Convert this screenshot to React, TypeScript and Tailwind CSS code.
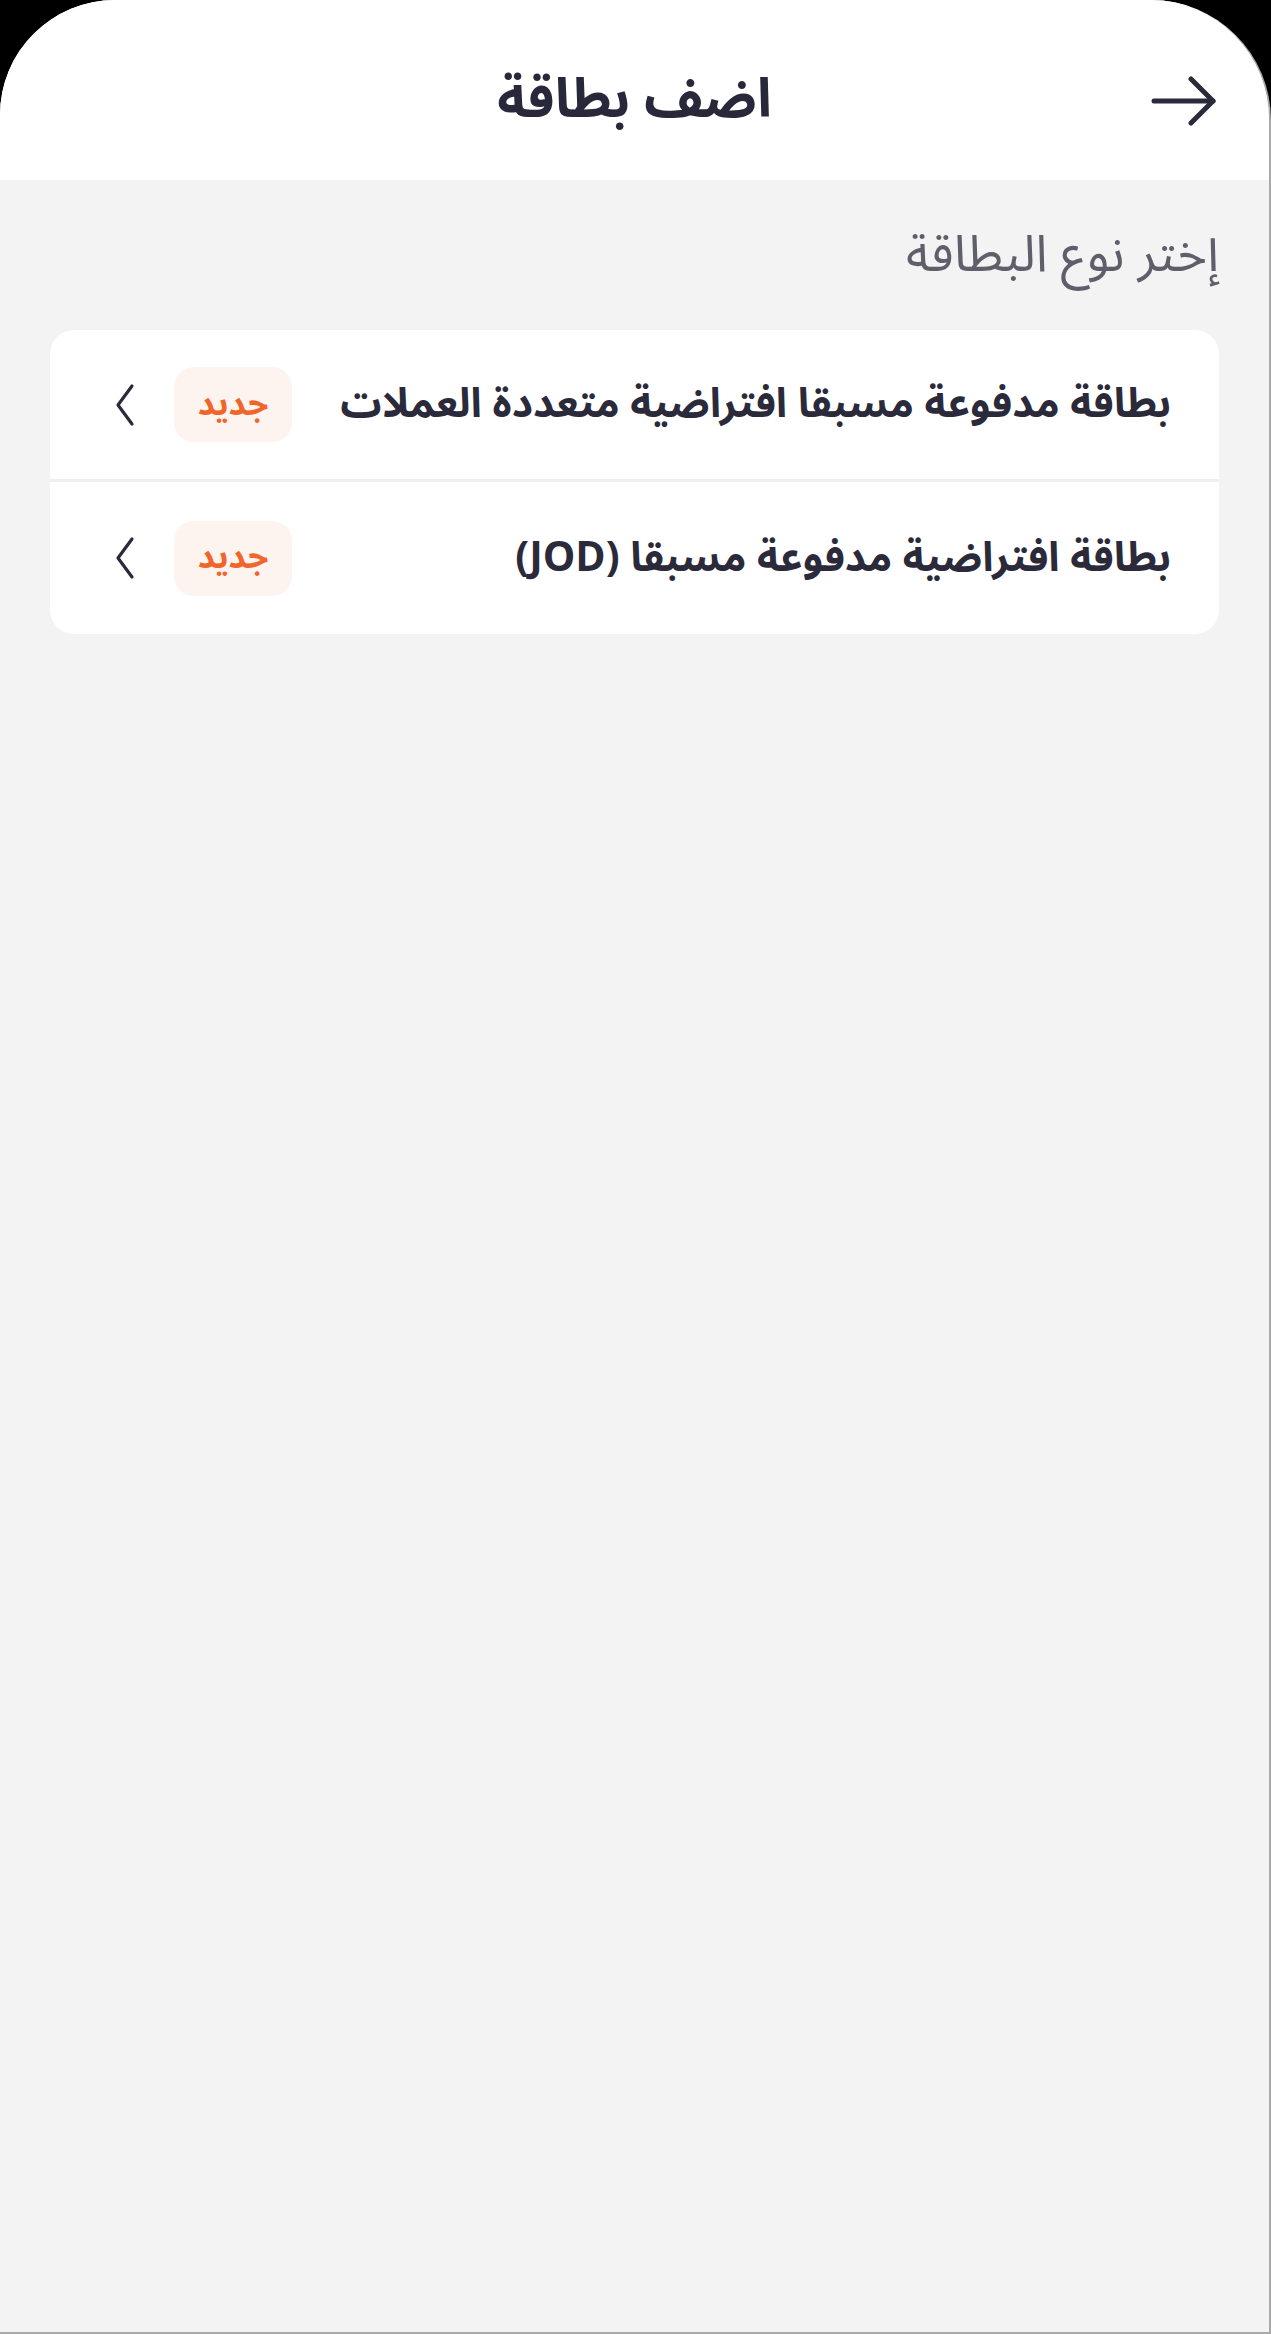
const font = { fontFamily: '"Noto Sans Arabic", "Noto Sans", "DejaVu Sans", sans-serif' };

const cards = [
  { title: "بطاقة مدفوعة مسبقا افتراضية متعددة العملات" },
  { title: "بطاقة افتراضية مدفوعة مسبقا (JOD)" },
];

function BackArrow() {
  return (
    <svg viewBox="0 0 66 50" className="h-[50px] w-[66px]" fill="none" stroke="#2b2a3a" strokeWidth={5} strokeLinecap="round" strokeLinejoin="round">
      <path d="M3 25 H62" />
      <path d="M40 3 L62 25 L40 47" />
    </svg>
  );
}

function Chevron() {
  return (
    <svg viewBox="0 0 22 44" className="h-[44px] w-[22px]" fill="none" stroke="#2b2a3a" strokeWidth={3.2} strokeLinecap="round" strokeLinejoin="round">
      <path d="M18 3 L4 22 L18 41" />
    </svg>
  );
}

function CardRow({ title, last }: { title: string; last?: boolean }) {
  return (
    <div
      className={
        "flex h-[152px] items-center pr-[48px] pl-[64px] " +
        (last ? "" : "border-b-[3px] border-[#efeff3]")
      }
    >
      <div className="flex-1 text-[41px] leading-none font-bold text-[#2b2a3a]">{title}</div>
      <div className="flex h-[75px] w-[118px] items-center justify-center rounded-[20px] bg-[#fef4ef] text-[33px] font-bold text-[#f0652a]">
        جديد
      </div>
      <div className="mr-[38px]">
        <Chevron />
      </div>
    </div>
  );
}

export default function App() {
  return (
    <div className="h-[2334px] w-[1271px] bg-black" style={font}>
      <div
        dir="rtl"
        className="flex h-full flex-col overflow-hidden rounded-tl-[115px] rounded-tr-[120px] border-r-2 border-b-2 border-[#a9a9a9] bg-[#f3f3f3]"
      >
        <header className="relative flex h-[180px] shrink-0 items-center justify-center bg-white pt-[20px]">
          <div className="absolute right-[52px] top-[76px]">
            <BackArrow />
          </div>
          <h1 className="text-[54px] leading-none font-bold text-[#29283a]">اضف بطاقة</h1>
        </header>

        <div className="px-[50px]">
          <div className="flex h-[150px] items-center">
            <p className="text-[51px] leading-none text-[#5f5e6b]">إختر نوع البطاقة</p>
          </div>
          <div className="overflow-hidden rounded-[24px] bg-white">
            {cards.map((c, i) => (
              <CardRow key={c.title} title={c.title} last={i === cards.length - 1} />
            ))}
          </div>
        </div>
      </div>
    </div>
  );
}
